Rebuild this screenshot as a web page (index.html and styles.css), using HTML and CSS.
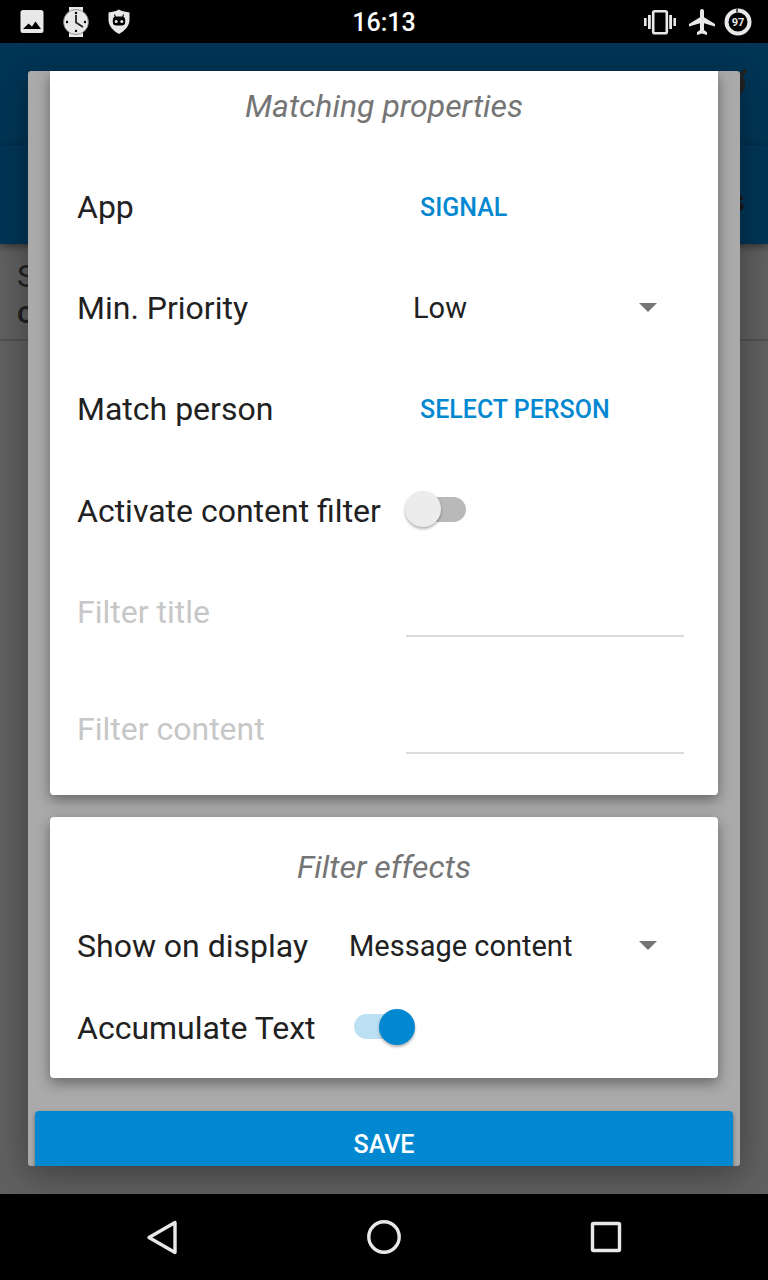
FILE: index.html
```html
<!DOCTYPE html>
<html lang="en">
<head>
<meta charset="utf-8">
<meta name="viewport" content="width=device-width, initial-scale=1">
<title>Edit filter</title>
<link rel="stylesheet" href="styles.css">
</head>
<body>
<div class="screen">
  <header class="status">
    <div class="status-icons status-left">
      <svg width="24" height="30" viewBox="0 0 24 30" aria-hidden="true"><path fill="#e8e8e8" fill-rule="evenodd" d="M3 3h18a2.500 2.500 0 0 1 2.500 2.500v18a2.500 2.500 0 0 1-2.500 2.500H3A2.500 2.500 0 0 1 .5 23.500v-18A2.500 2.500 0 0 1 3 3zM3 22h18l-5.500-7.500-3.500 5-3.500-3z"/></svg>
      <svg width="26" height="30" viewBox="0 0 26 30" aria-hidden="true"><path fill="#e8e8e8" d="M6 0h14v30H6z"/><circle cx="13" cy="15" r="12.500" fill="#e8e8e8" stroke="#777" stroke-width=".8"/><path d="M13 8v7.500l7 4.500" fill="none" stroke="#222" stroke-width="1.800"/><circle cx="13" cy="6" r="1.200"/><circle cx="13" cy="24" r="1.200"/><circle cx="4" cy="15" r="1.200"/><circle cx="22" cy="15" r="1.200"/></svg>
      <svg width="22" height="30" viewBox="0 0 22 30" aria-hidden="true"><path fill="#e8e8e8" d="M11 2.500c3 2 7 2.500 10.500 3V13c0 6-5 11-10.500 14C5.500 24 .5 19 .5 13V5.500C4 5 8 4.500 11 2.500z"/><path d="M6.500 7.500l1 3M15.500 7.500l-1 3" stroke="#111" stroke-width="1.200"/><rect x="4.800" y="9.500" width="12.400" height="9" rx="3.500"/><circle cx="8.200" cy="14.500" r="1.500" fill="#e8e8e8"/><circle cx="13.800" cy="14.500" r="1.500" fill="#e8e8e8"/></svg>
    </div>
    <time class="clock">16:13</time>
    <div class="status-icons status-right">
      <svg width="32" height="28" viewBox="0 0 32 28" aria-hidden="true"><rect x="9.200" y="3.200" width="13.600" height="22" rx="1.500" fill="none" stroke="#e8e8e8" stroke-width="2.600"/><path fill="#e8e8e8" d="M4 7h2.800v14H4zM0 10h2.600v8H0zM25.200 7H28v14h-2.800zM29.400 10H32v8h-2.600z"/></svg>
      <svg width="26" height="28" viewBox="0 0 26 28" aria-hidden="true"><path fill="#e8e8e8" d="M26 18.500v-2.600L15 9.300V3a2 2 0 0 0-4 0v6.300L0 15.900v2.600l11-3.300V22l-3 2.300V27l5-1.400 5 1.400v-2.700L15 22v-6.800z"/></svg>
      <svg width="28" height="28" viewBox="0 0 28 28" aria-hidden="true"><circle cx="14" cy="14" r="11.500" fill="none" stroke="#e8e8e8" stroke-width="4"/><path d="M13 0v4.500" stroke="#555" stroke-width="2"/><text x="14" y="18" text-anchor="middle" class="battery-text">97</text></svg>
    </div>
  </header>

  <main class="stage">
    <div class="behind" aria-hidden="true">
      <div class="toolbar">
        <svg width="30" height="34" viewBox="0 0 30 34"><circle cx="12" cy="19" r="13" fill="#222"/><path d="M20 11l6-6" stroke="#222" stroke-width="4"/></svg>
      </div>
      <div class="tabs"><span>s</span></div>
      <div class="list-item"><span>S</span><b>c</b></div>
      <div class="list-rest"></div>
    </div>

    <form class="dialog">
      <section class="card card-match">
        <h2 class="card-title">Matching properties</h2>
        <div class="row">
          <span class="label">App</span>
          <button type="button" class="flat">SIGNAL</button>
        </div>
        <div class="row">
          <label class="label" for="priority">Min. Priority</label>
          <div class="spinner">
            <select id="priority"><option>Low</option></select>
            <svg class="arrow" width="18" height="10" viewBox="0 0 18 10" aria-hidden="true"><path d="M0 0h18L9 9z"/></svg>
          </div>
        </div>
        <div class="row">
          <span class="label">Match person</span>
          <button type="button" class="flat">SELECT PERSON</button>
        </div>
        <div class="row row-switch">
          <label class="label" for="content-filter">Activate content filter</label>
          <input class="switch" type="checkbox" id="content-filter">
        </div>
        <div class="row row-field">
          <label class="label" for="filter-title">Filter title</label>
          <input class="field" type="text" id="filter-title" disabled>
        </div>
        <div class="row row-field">
          <label class="label" for="filter-content">Filter content</label>
          <input class="field" type="text" id="filter-content" disabled>
        </div>
      </section>

      <section class="card card-effects">
        <h2 class="card-title">Filter effects</h2>
        <div class="row">
          <label class="label" for="display">Show on display</label>
          <div class="spinner">
            <select id="display"><option>Message content</option></select>
            <svg class="arrow" width="18" height="10" viewBox="0 0 18 10" aria-hidden="true"><path d="M0 0h18L9 9z"/></svg>
          </div>
        </div>
        <div class="row">
          <label class="label" for="accumulate">Accumulate Text</label>
          <input class="switch" type="checkbox" id="accumulate" checked>
        </div>
      </section>

      <button type="button" class="save">SAVE</button>
    </form>
  </main>

  <nav class="navbar">
    <button type="button" aria-label="Back"><svg width="36" height="36" viewBox="0 0 36 36"><path d="M31 3.500v30L5 18.500z"/></svg></button>
    <button type="button" aria-label="Home"><svg width="36" height="36" viewBox="0 0 36 36"><circle cx="18" cy="18" r="15.200"/></svg></button>
    <button type="button" aria-label="Recent apps"><svg width="36" height="36" viewBox="0 0 36 36"><rect x="4.500" y="4.500" width="27" height="27" rx="1"/></svg></button>
  </nav>
</div>
</body>
</html>
```
FILE: styles.css
```css
* {
  box-sizing: border-box;
}

body {
  margin: 0;
  background: #000;
  color: #212121;
  font-family: Roboto, "Liberation Sans", sans-serif;
  font-size: 32px;
  line-height: 40px;
}

button,
input,
select {
  margin: 0;
  padding: 0;
  border: 0;
  background: none;
  color: inherit;
  font: inherit;
}

.screen {
  display: grid;
  grid-template-rows: 43px minmax(0, 1fr) 86px;
  height: 100vh;
}

/* Status bar */
.status {
  display: grid;
  grid-template-columns: 1fr auto 1fr;
  align-items: center;
  padding: 0 16px 0 20px;
  background: #000;
}

.status-icons {
  display: flex;
  align-items: center;
}

.status-left {
  gap: 19px;
}

.status-right {
  justify-content: flex-end;
  gap: 13px;
}

.status-right svg:last-child {
  margin-left: -4px;
}

.clock {
  padding: 2px 4px 0 0;
  color: #fff;
  font-size: 25px;
  font-weight: 500;
  line-height: 30px;
}

.battery-text {
  fill: #e8e8e8;
  font-size: 11px;
  font-weight: 700;
}

/* Dimmed screen under the dialog */
.stage {
  display: grid;
  grid-template: minmax(0, 1fr) / minmax(0, 1fr);
  overflow: hidden;
}

.behind,
.dialog {
  grid-area: 1 / 1;
}

.behind {
  display: grid;
  grid-template-rows: 102px 99px 97px 1fr;
  background: #606060;
}

.toolbar,
.tabs {
  display: flex;
  justify-content: flex-end;
  background: #003555;
}

.toolbar {
  padding: 22px 18px 0 0;
}

.tabs {
  align-items: center;
  padding: 12px 23px 0 0;
  box-shadow: 0 2px 8px rgba(0, 0, 0, 0.5);
  color: #1a1a1a;
  font-size: 29px;
  font-weight: 500;
}

.list-item {
  display: flex;
  flex-direction: column;
  padding: 14px 17px;
  border-bottom: 2px solid #505050;
  line-height: 36px;
}

.list-item b {
  font-weight: 500;
}

/* Dialog */
.dialog {
  display: flex;
  flex-direction: column;
  margin: 28px;
  overflow: hidden;
  border-radius: 3px;
  background: #aaa;
  box-shadow: 0 8px 34px rgba(0, 0, 0, 0.36);
}

.card {
  flex: none;
  margin: 0 22px 22px;
  padding: 0 27px;
  border-radius: 4px;
  background: #fff;
  box-shadow: 0 5px 14px rgba(0, 0, 0, 0.4);
}

.card-match {
  padding-bottom: 8px;
  border-radius: 0 0 4px 4px;
}

.card-effects {
  margin-bottom: 33px;
  padding-bottom: 9px;
}

.card-title {
  margin: 0;
  color: #757575;
  font-size: 32px;
  font-style: italic;
  font-weight: 400;
  text-align: center;
}

.card-match .card-title {
  padding: 15px 0 30px;
}

.card-effects .card-title {
  padding: 30px 0 18px;
}

.row {
  display: grid;
  grid-template-columns: 322px minmax(0, 1fr);
  align-items: center;
  min-height: 101px;
}

.card-effects .row {
  grid-template-columns: 258px minmax(0, 1fr);
  min-height: 82px;
}

.card-match .row-switch {
  min-height: 94px;
  padding-top: 9px;
}

.row-field {
  min-height: 117px;
}

.row-field .label {
  color: #c7c7c7;
}

.flat {
  justify-self: start;
  padding: 14px 21px 12px;
  color: #0288d1;
  font-size: 25px;
  font-weight: 500;
  line-height: 30px;
}

.spinner {
  display: grid;
  align-items: center;
}

.spinner select,
.arrow {
  grid-area: 1 / 1;
}

.spinner select {
  appearance: none;
  height: 44px;
  padding: 0 60px 0 14px;
  font-size: 29px;
}

.arrow {
  justify-self: end;
  margin-right: 34px;
  fill: #757575;
  pointer-events: none;
}

.field {
  height: 50px;
  margin: 0 7px;
  border-bottom: 2px solid #dcdcdc;
}

.switch {
  display: grid;
  align-items: center;
  width: 61px;
  height: 36px;
  margin: 0 6px 3px;
  appearance: none;
}

.card-effects .switch {
  margin-left: 19px;
}

.switch::before,
.switch::after {
  grid-area: 1 / 1;
  border-radius: 18px;
  content: "";
}

.switch::before {
  height: 25px;
  margin-left: 6px;
  background: #b9b9b9;
}

.switch::after {
  width: 36px;
  height: 36px;
  background: #ececec;
  box-shadow: 0 2px 3px rgba(0, 0, 0, 0.3);
}

.switch:checked::before {
  margin: 0 6px 0 0;
  background: #bce0f3;
}

.switch:checked::after {
  justify-self: end;
  background: #0288d1;
}

.save {
  flex: none;
  height: 68px;
  margin: 0 7px;
  border-radius: 4px;
  background: #0288d1;
  box-shadow: 0 2px 4px rgba(0, 0, 0, 0.4);
  color: #fff;
  font-size: 25px;
  font-weight: 500;
}

/* Navigation bar */
.navbar {
  display: grid;
  grid-template-columns: repeat(3, 1fr);
  padding: 0 51px;
  background: #000;
}

.navbar button {
  display: grid;
  place-items: center;
}

.navbar svg {
  fill: none;
  stroke: #e8e8e8;
  stroke-linejoin: round;
  stroke-width: 3.4;
}
```
